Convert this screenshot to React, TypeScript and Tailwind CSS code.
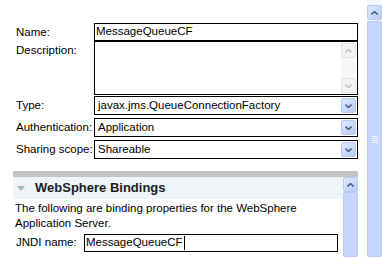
import React from "react";

const font = { fontFamily: '"Liberation Sans", Arial, sans-serif' };

function ArrowUp({ color = "#4d6185" }: { color?: string }) {
  return (
    <svg width="7" height="4" viewBox="0 0 7 4">
      <path d="M0.5 3.5 L3.5 0.5 L6.5 3.5" fill="none" stroke={color} strokeWidth="1.6" />
    </svg>
  );
}

function ArrowDown({ color = "#4d6185" }: { color?: string }) {
  return (
    <svg width="7" height="4" viewBox="0 0 7 4">
      <path d="M0.5 0.5 L3.5 3.5 L6.5 0.5" fill="none" stroke={color} strokeWidth="1.6" />
    </svg>
  );
}

function BlueButton({ dir }: { dir: "up" | "down" }) {
  return (
    <div className="flex h-[15px] w-[15px] shrink-0 items-center justify-center rounded-[2px] border border-[#b7caf5] bg-gradient-to-br from-[#e0e9fd] to-[#b9ccf6]">
      {dir === "up" ? <ArrowUp /> : <ArrowDown />}
    </div>
  );
}

function Row({ label, children, className }: { label: string; children: React.ReactNode; className?: string }) {
  return (
    <div className={"flex items-start " + (className ?? "")}>
      <div className="w-[78px] shrink-0 whitespace-nowrap pt-[2px] leading-[14px]">{label}</div>
      <div className="flex-1">{children}</div>
    </div>
  );
}

function Select({ value }: { value: string }) {
  return (
    <div className="flex h-[19px] items-center border border-black bg-white pl-[3px] pr-[1px]">
      <span className="flex-1 leading-none text-black">{value}</span>
      <BlueButton dir="down" />
    </div>
  );
}

export default function App() {
  return (
    <div className="flex h-[257px] w-[382px] overflow-hidden bg-white text-[11.5px] text-black" style={font}>
      <div className="flex-1 pl-[13px] pr-[9px]">
        <div className="flex flex-col pl-[3px] pt-[23px]">
          <Row label="Name:">
            <div className="flex h-[18px] items-center border border-black pl-[1px] leading-none">MessageQueueCF</div>
          </Row>
          <Row label="Description:">
            <div className="flex h-[54px] justify-end border border-black p-[1px]">
              <div className="flex w-[15px] flex-col justify-between bg-[#f7f7f4]">
                <div className="flex h-[15px] items-center justify-center rounded-[2px] border border-[#e6e6e0] bg-[#f3f3ef]">
                  <ArrowUp color="#c9c7ba" />
                </div>
                <div className="flex h-[15px] items-center justify-center rounded-[2px] border border-[#e6e6e0] bg-[#f3f3ef]">
                  <ArrowDown color="#c9c7ba" />
                </div>
              </div>
            </div>
          </Row>
          <Row label="Type:" className="mt-[1px]">
            <Select value="javax.jms.QueueConnectionFactory" />
          </Row>
          <Row label="Authentication:" className="mt-[3px]">
            <Select value="Application" />
          </Row>
          <Row label="Sharing scope:" className="mt-[3px]">
            <Select value="Shareable" />
          </Row>
        </div>
        <div className="mt-[12px] flex h-[86px] flex-col">
          <div className="h-[6px] bg-[#c4c4c4]" />
          <div className="flex flex-1">
            <div className="flex-1">
              <div className="flex h-[22px] items-center gap-[10px] bg-[#eef4f8] pl-[4px]">
                <svg width="8" height="5" viewBox="0 0 8 5">
                  <path d="M0 0 H8 L4 5 Z" fill="#a3b6c9" />
                </svg>
                <span className="text-[13px] font-bold text-[#1c1c1c]">WebSphere Bindings</span>
              </div>
              <div className="pl-[2px] pt-[2px] leading-[15px]">
                The following are binding properties for the WebSphere
                <br />
                Application Server.
              </div>
              <div className="mt-[3px] flex items-center pl-[3px]">
                <span className="w-[68px] shrink-0">JNDI name:</span>
                <div className="flex h-[18px] w-[254px] items-center border border-black pl-[1px] leading-none">
                  MessageQueueCF<span className="ml-[1px] h-[14px] w-px bg-black" />
                </div>
              </div>
            </div>
            <div className="flex w-[15px] flex-col bg-[#eef3fd]">
              <BlueButton dir="up" />
              <div className="flex-1 rounded-[2px] border border-[#b7caf5] bg-[#c6d5fb]" />
            </div>
          </div>
        </div>
      </div>
      <div className="flex w-[15px] flex-col bg-[#f3f6fd] pt-[5px]">
        <BlueButton dir="up" />
        <div className="mt-[1px] flex flex-1 items-center justify-center rounded-[2px] border border-[#b7caf5] bg-[#c6d5fb]">
          <div className="flex flex-col gap-[1px]">
            <div className="h-px w-[6px] bg-[#eef3fd]" />
            <div className="h-px w-[6px] bg-[#eef3fd]" />
            <div className="h-px w-[6px] bg-[#eef3fd]" />
            <div className="h-px w-[6px] bg-[#eef3fd]" />
          </div>
        </div>
      </div>
    </div>
  );
}
